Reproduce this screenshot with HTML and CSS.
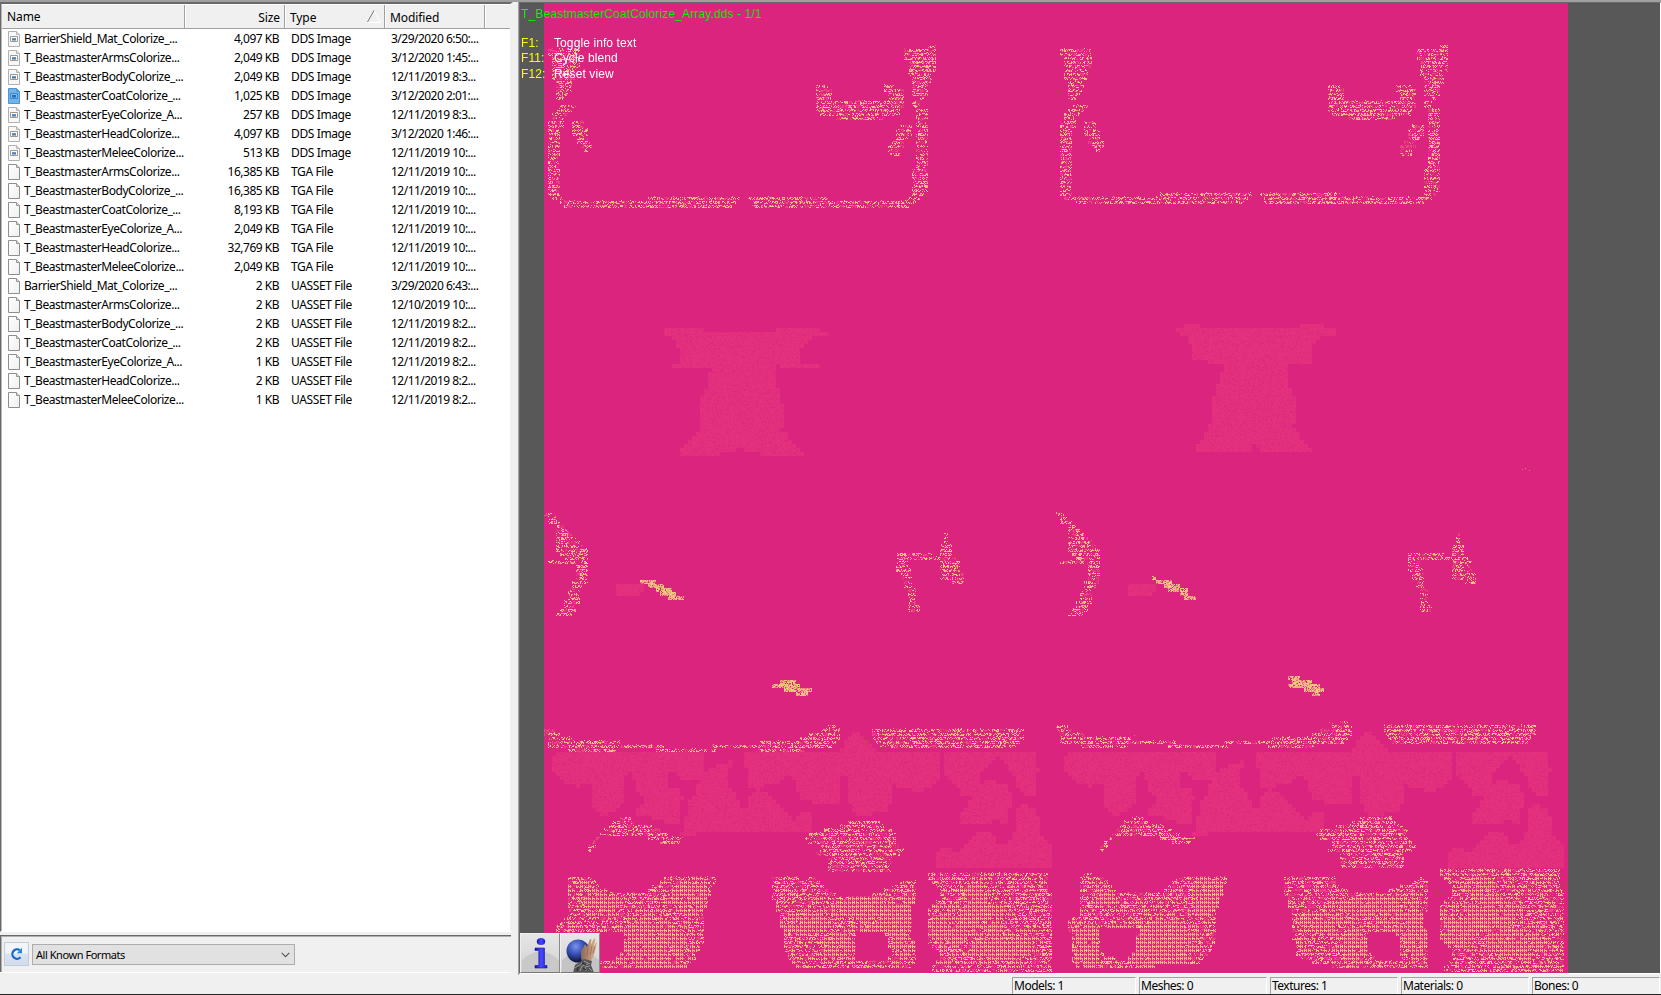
FILE: index.html
```html
<!DOCTYPE html>
<html lang="en">
<head>
<meta charset="utf-8">
<title>Texture browser</title>
<link rel="stylesheet" href="styles.css">
</head>
<body>
<svg width="0" height="0" class="defs">
  <defs>
    <linearGradient id="paper" x1="0" y1="0" x2="1" y2="1"><stop offset="0" stop-color="#fff"/><stop offset="1" stop-color="#eef0f0"/></linearGradient>
    <linearGradient id="pic" x1="0" y1="0" x2="0" y2="1"><stop offset="0" stop-color="#6fa4dc"/><stop offset="1" stop-color="#3c6a80"/></linearGradient>
    <radialGradient id="ball" cx=".4" cy=".3" r=".7"><stop offset="0" stop-color="#7c94e8"/><stop offset=".45" stop-color="#3b55bd"/><stop offset="1" stop-color="#0b1136"/></radialGradient>
    <linearGradient id="blue"><stop offset="0" stop-color="#1414b4"/><stop offset=".5" stop-color="#4a4aff"/><stop offset="1" stop-color="#1c1cd0"/></linearGradient>
    <linearGradient id="skin"><stop offset="0" stop-color="#8c6659"/><stop offset="1" stop-color="#e0b68e"/></linearGradient>
    <symbol id="file" viewBox="0 0 12 16"><path d="M.5.5h8l3 3v12H.5z" fill="url(#paper)" stroke="#8e8e8e"/><path d="M8.5.5v3h3" fill="#ddd" stroke="#8e8e8e" stroke-width=".9"/></symbol>
    <symbol id="image" viewBox="0 0 12 16"><path d="M.5.5h8l3 3v12H.5z" fill="#f7f7f7" stroke="#b0b0b0"/><path d="M8.5.5v3h3" fill="#ddd" stroke="#b0b0b0" stroke-width=".9"/><path d="M2.500 5.500h7v5h-7z" fill="#fff" stroke="#999"/><path d="M4 7h4v2.500H4z" fill="url(#pic)"/></symbol>
    <symbol id="picked" viewBox="0 0 12 16"><path d="M.5.5h8l3 3v12H.5z" fill="#74b4e8" stroke="#4b96d6"/><path d="M8.5.5v3h3" fill="#5aa3df" stroke="#4b96d6"/><path d="M2.500 5.500h7v5h-7z" fill="#7fbcf0" stroke="#3f86c8"/><path d="M4 7h4v2.500H4z" fill="#1f6cba"/></symbol>
  </defs>
</svg>
<div class="app">
  <div class="main">
    <div class="side">
      <div class="list">
        <div class="row head">
          <span class="c-name">Name</span><span class="c-size">Size</span><span class="c-type">Type
            <svg class="sort" width="14" height="13"><path d="M13.500 12.500H.5" stroke="#fff" fill="none"/><path d="M7 .5l6.500 12" stroke="#fff" fill="none"/><path d="M.5 12L7 .5" stroke="#777" fill="none"/></svg></span><span class="c-mod">Modified</span><span class="c-rest"></span>
        </div>
        <div id="rows"></div>
      </div>
      <div class="filter">
        <div class="refresh"><svg width="14" height="14" viewBox="0 0 14 14"><path d="M10.500 10.300A4.700 4.700 0 1 1 9.700 3.200" fill="none" stroke="#1467c8" stroke-width="2.200"/><path d="M12 .8v5.400H6.800z" fill="#1c8ae8"/></svg></div>
        <div class="combo"><span>All Known Formats</span><svg width="9" height="6"><path d="M.7.8l3.800 3.900L8.300.8" fill="none" stroke="#555" stroke-width="1.100"/></svg></div>
      </div>
    </div>
    <div class="view">
      <canvas id="tex" width="1024" height="970"></canvas>
      <div class="info">
        <div class="title">T_BeastmasterCoatColorize_Array.dds - 1/1</div>
        <div class="key k1"><b>F1:</b><span>Toggle info text</span></div>
        <div class="key"><b>F11:</b><span>Cycle blend</span></div>
        <div class="key k3"><b>F12:</b><span>Reset view</span></div>
      </div>
      <div class="tools">
        <div class="tool"><svg width="40" height="40"><path d="M1 26Q19 9 38 26V38H1z" fill="#c9c9c9"/><ellipse cx="20" cy="7.500" rx="4.200" ry="3.500" fill="url(#blue)"/><path d="M14 14h9.500v17.500h2.500V34H14v-2.500h3.800V16.500H14z" fill="url(#blue)" stroke="#1414a0" stroke-width=".6"/></svg></div>
        <div class="tool"><svg width="40" height="40"><path d="M1 26Q19 9 38 26V38H1z" fill="#c4c4c4"/><circle cx="17" cy="17" r="11.500" fill="url(#ball)"/><path d="M21 28l-1-5 0-6 2-3 2-4 2 3 3-8 1.500.5-1 6L33 4.500l1.500.5-2 9L35 8l1 1-3 12-4 7z" fill="url(#skin)"/><path d="M26 22l1-9M29 21l2-9M32 19l2-7" stroke="#8a6450" stroke-width=".7" fill="none"/><path d="M12 39l2-8 6-4 3-2 8 2-1 4 3 8z" fill="#555"/><path d="M14 34l7-5M19 37l2-5 6-2M23 27l6 3M25 37l-1-4 5-1M28 34l3 3" stroke="#999" fill="none"/><path d="M16 37l1-4M22 34l3 2M21 29l4 2" stroke="#222" fill="none"/></svg></div>
      </div>
    </div>
  </div>
  <div class="status"><span>Models: 1</span><span>Meshes: 0</span><span>Textures: 1</span><span>Materials: 0</span><span>Bones: 0</span></div>
</div>
<script src="app.js"></script>
</body>
</html>
```
FILE: styles.css
```css
* { box-sizing: border-box; }
body { margin: 0; background: #f0f0f0; font: 12px/19px "Noto Sans", "Open Sans", sans-serif; color: #000; overflow: hidden; }
.defs { position: absolute; }
.app { width: 1661px; height: 995px; display: flex; flex-direction: column; border-top: 2px solid #a0a0a0; }
.main { display: flex; height: 973px; flex: none; }
.side { width: 519px; display: flex; flex-direction: column; gap: 3px; padding-right: 5px; border-right: 1px solid #a0a0a0; }
.list { height: 930px; flex: none; background: #fff; border: solid #696969; border-width: 2px 0 0 1px; box-shadow: inset 1px 0 #b8b8b8; border-right: 3px solid #f0f0f0; border-bottom: 1px solid #fff; padding-left: 1px; }
.row { display: flex; height: 19px; white-space: nowrap; }
.row span { flex: none; }
.head { background: #f0f0f0; height: 25px; line-height: 26px; border-bottom: 1px solid #a0a0a0; border-top: 1px solid #fff; letter-spacing: -0.1px; }
.head span { border-right: 1px solid #a0a0a0; box-shadow: 1px 0 #fff; }
.head .c-rest { border: 0; box-shadow: none; }
.c-name { width: 183px; padding-left: 5px; display: flex; align-items: center; gap: 5px; }
.c-size { width: 100px; padding-right: 4px; text-align: right; }
.c-type { width: 100px; padding-left: 5px; position: relative; }
.c-mod { width: 100px; padding-left: 5px; }
.body .c-name { padding-left: 6px; gap: 4px; letter-spacing: -0.45px; }
.body .c-name svg { flex: none; }
.body .c-type { padding-left: 6px; letter-spacing: -0.38px; }
.body .c-mod { padding-left: 6px; letter-spacing: -0.52px; }
.body .c-size { padding-right: 6px; letter-spacing: -0.5px; }
.sort { position: absolute; right: 3px; top: 5px; }
.filter { height: 37px; display: flex; align-items: flex-start; gap: 3px; padding: 6px 0 0 3px; margin-right: 2px; border: solid #696969; border-width: 1px 0 0 1px; box-shadow: inset 1px 1px #b0b0b0, 0 1px #fff; }
.refresh { width: 25px; height: 24px; border: 1px solid #c3ccd8; background: linear-gradient(#f1f4f9 45%, #dbe3f0 50%, #d2dcec); display: flex; align-items: center; justify-content: center; }
.combo { margin-top: 2px; width: 263px; height: 21px; background: #e1e1e1; border: 1px solid #adadad; display: flex; align-items: center; justify-content: space-between; padding: 0 4px 0 3px; font-size: 11px; letter-spacing: -0.45px; }
.view { position: relative; width: 1142px; height: 972px; background: #585858; border: 1px solid #696969; border-right-color: #fff; border-bottom-color: #fff; padding-left: 24px; }
#tex { display: block; }
.info { position: absolute; left: 1px; top: 4px; font: 12px/15px "Liberation Sans", Arial, sans-serif; color: #fff; letter-spacing: .1px; }
.title { color: #0f0; height: 15px; letter-spacing: .13px; white-space: nowrap; }
.key { display: flex; }
.key b { width: 33px; font-weight: normal; color: #ff0; letter-spacing: .1px; }
.k1 { margin-top: 14px; }
.k3 { margin-top: 1px; }
.tools { position: absolute; left: 0; bottom: 0; display: flex; }
.tool { width: 40px; height: 40px; background: linear-gradient(#e6e6e6, #d2d2d2); border: 1px solid #efefef; border-right-color: #8a8a8a; border-bottom-color: #777; overflow: hidden; }
.tool svg { display: block; }
.status { height: 20px; padding: 2px 0 0 1012px; display: flex; gap: 3px; border-bottom: 1px solid #262626; }
.status span { flex: none; width: 128px; height: 17px; line-height: 16px; border: 1px solid #a0a0a0; border-right-color: #fff; border-bottom: 0; padding-left: 1px; letter-spacing: -.5px; }
.status span:first-child { width: 124px; }
```
FILE: app.js
```js
const files = `BarrierShield_Mat_Colorize_...|4,097|DDS|3/29/2020 6:50:...
T_BeastmasterArmsColorize...|2,049|DDS|3/12/2020 1:45:...
T_BeastmasterBodyColorize_...|2,049|DDS|12/11/2019 8:3...
T_BeastmasterCoatColorize_...|1,025|DDS|3/12/2020 2:01:...
T_BeastmasterEyeColorize_A...|257|DDS|12/11/2019 8:3...
T_BeastmasterHeadColorize...|4,097|DDS|3/12/2020 1:46:...
T_BeastmasterMeleeColorize...|513|DDS|12/11/2019 10:...
T_BeastmasterArmsColorize...|16,385|TGA|12/11/2019 10:...
T_BeastmasterBodyColorize_...|16,385|TGA|12/11/2019 10:...
T_BeastmasterCoatColorize_...|8,193|TGA|12/11/2019 10:...
T_BeastmasterEyeColorize_A...|2,049|TGA|12/11/2019 10:...
T_BeastmasterHeadColorize...|32,769|TGA|12/11/2019 10:...
T_BeastmasterMeleeColorize...|2,049|TGA|12/11/2019 10:...
BarrierShield_Mat_Colorize_...|2|UASSET|3/29/2020 6:43:...
T_BeastmasterArmsColorize...|2|UASSET|12/10/2019 10:...
T_BeastmasterBodyColorize_...|2|UASSET|12/11/2019 8:2...
T_BeastmasterCoatColorize_...|2|UASSET|12/11/2019 8:2...
T_BeastmasterEyeColorize_A...|1|UASSET|12/11/2019 8:2...
T_BeastmasterHeadColorize...|2|UASSET|12/11/2019 8:2...
T_BeastmasterMeleeColorize...|1|UASSET|12/11/2019 8:2...`.split('\n').map(l => l.split('|'));
document.getElementById('rows').innerHTML = files.map(([n, s, t, m], i) =>
  `<div class="row body"><span class="c-name"><svg width="12" height="16"><use href="#${i === 3 ? 'picked' : t === 'DDS' ? 'image' : 'file'}"/></svg>${n}</span><span class="c-size">${s} KB</span><span class="c-type">${t} ${t === 'DDS' ? 'Image' : 'File'}</span><span class="c-mod">${m}</span></div>`).join('');

// The texture is built of 4x4 compression blocks; coordinates are window pixels.
const OX = 544, OY = 3;
const ctx = document.getElementById('tex').getContext('2d');
ctx.fillStyle = '#da247e';
ctx.fillRect(0, 0, 1024, 970);
let seed = 7;
const rnd = () => ((seed = (seed * 1664525 + 1013904223) >>> 0) / 4294967296);
const px = (x, y, c, w = 1) => { ctx.fillStyle = c; ctx.fillRect(x - OX, y - OY, w, 1); };
const poly = s => s.split(' ').map(p => p.split(',').map(Number));
function inside(P, x, y) {
  let r = false;
  for (let i = 0, j = P.length - 1; i < P.length; j = i++) {
    const [a, b] = P[i], [c, d] = P[j];
    if ((b > y) !== (d > y) && x < (c - a) * (y - b) / (d - b) + a) r = !r;
  }
  return r;
}
function blocks(P, fn, hole) {
  const xs = P.map(p => p[0]), ys = P.map(p => p[1]);
  for (let y = Math.floor(Math.min(...ys) / 4) * 4; y < Math.max(...ys); y += 4)
    for (let x = Math.floor(Math.min(...xs) / 4) * 4; x < Math.max(...xs); x += 4)
      if (inside(P, x + 2, y + 2) && !(hole && inside(hole, x + 2, y + 2))) fn(x, y);
}
const tones = ['#e8cf7c', '#f0b483', '#f5a582', '#e8cf7c', '#ee6f7d'];
const tone = () => tones[Math.floor(rnd() * 5)];
function sparse(x, y) {
  const c = rnd() < .14 ? '#e84a7e' : null;
  for (let j = 0; j < 4; j++) for (let i = 0; i < 4; i++)
    if (rnd() < (j === 0 ? .06 : .48)) px(x + i, y + j, c || tone());
}
function dense(x, y) {
  const c = rnd() < .8 ? '#f0b483' : '#e8cf7c';
  px(x, y, '#e84a7e', 2);
  px(x, y + 1, c); px(x, y + 2, c, 3); px(x, y + 3, c); px(x + 2, y + 3, c);
  if (rnd() < .35) px(x + 2, y + 1, c);
  if (rnd() < .4) px(x + 3, y + 2, '#ee6f7d');
}
function solid(x, y) {
  for (let j = 0; j < 4; j++) for (let i = 0; i < 4; i++)
    if (rnd() < .85) px(x + i, y + j, tone());
}
function light(x, y) {
  for (let j = 0; j < 4; j++) for (let i = 0; i < 4; i++) px(x + i, y + j, rnd() < .25 ? '#de297f' : '#e4317e');
}
const shift = (P, dy) => P.map(([x, y]) => [x + 512, y + dy]);
const both = (s, fn, dy = 0) => { const P = poly(s); blocks(P, fn); blocks(shift(P, dy), fn); };

// faint regions
blocks(poly('664,332 668,328 704,328 704,332 776,332 776,328 820,328 820,332 828,332 828,336 816,336 805,344 800,348 800,364 820,364 820,368 784,368 776,364 776,388 780,388 780,404 784,404 784,424 780,432 788,432 788,440 800,448 804,452 804,456 764,456 760,452 744,452 740,446 736,452 724,452 720,456 680,456 680,452 688,444 696,432 700,432 700,404 704,390 708,388 708,376 712,368 672,368 672,364 680,364 680,348 676,344 672,336 664,336'), light);
blocks(poly('1176,328 1184,328 1184,324 1200,324 1200,328 1300,328 1300,324 1324,324 1324,328 1336,328 1336,336 1324,336 1312,348 1312,364 1288,364 1288,388 1292,388 1296,404 1296,424 1292,428 1300,432 1300,436 1312,448 1312,452 1260,452 1254,444 1252,452 1196,452 1196,448 1204,440 1208,428 1212,424 1212,404 1220,376 1224,372 1224,364 1192,360 1192,348 1188,336 1180,336'), light);
both('616,588 620,584 644,584 644,592 636,596 620,596 616,592', light);
both('552,756 560,752 708,752 704,756 704,776 700,780 680,780 680,776 672,772 668,776 668,788 680,788 680,792 684,796 680,804 680,824 672,824 660,820 648,816 636,816 636,812 644,804 648,800 640,796 636,788 632,772 624,776 624,800 616,812 600,816 592,804 592,784 584,784 580,788 560,780 552,768', light);
both('680,836 684,828 688,804 696,792 700,776 712,768 724,764 732,760 732,768 728,772 728,788 736,792 740,808 748,808 748,800 756,788 768,792 776,804 784,808 788,816 796,820 800,812 812,812 812,832 700,832 696,836', light);
both('744,752 840,752 844,744 848,736 860,732 868,740 876,748 880,752 940,752 940,776 936,784 920,792 904,788 892,784 892,796 888,812 856,816 852,808 848,796 848,776 840,776 840,804 824,804 800,800 796,784 788,772 780,784 752,788 748,784 748,768 744,764', light);
both('944,752 1036,752 1036,764 1040,768 1036,780 1036,796 1024,796 1016,784 1016,776 1008,768 1000,756 988,764 984,772 980,776 980,784 976,796 964,796 964,800 956,784 952,780 944,776', light);
both('980,784 988,780 1008,784 1012,796 1008,824 1004,828 1000,820 984,824 960,824 960,816 968,808 968,800 976,796', light);
both('936,868 936,852 944,848 960,852 968,844 972,836 980,832 992,832 996,836 996,844 1008,844 1012,836 1016,828 1016,812 1024,804 1036,808 1040,820 1040,832 1052,844 1052,868', light);

// speckled outlines
both('548,48 580,48 580,68 576,72 572,92 564,100 556,100 556,80 552,76 552,56 548,56', sparse);
both('560,104 576,104 576,108 568,112 562,120 564,126 560,128 560,192 564,200 556,200 548,196 548,128 552,116', sparse);
both('572,120 584,120 588,132 592,148 584,152 576,140 572,132', sparse);
both('648,196 740,196 736,204 732,208 568,208 556,200 648,200', sparse, -4);
both('748,196 830,196 830,200 916,200 912,208 752,208 752,200 748,200', sparse, -4);
both('916,108 928,108 928,192 920,200 908,200 912,192 912,168 916,168', sparse);
both('904,48 928,48 932,44 936,44 936,72 932,72 932,84 928,88 928,96 920,100 920,108 912,108 912,100 920,100 920,96 912,96 912,76 908,72 908,60 904,56', sparse);
both('816,88 820,84 828,84 832,88 832,100 888,100 888,92 884,88 888,84 896,84 904,88 904,108 900,112 900,116 888,116 880,120 836,120 836,116 824,116 816,108', sparse);
both('900,124 912,124 912,136 904,144 900,156 888,156 888,148 896,136', sparse);
both('544,512 552,512 560,520 572,532 580,544 588,550 588,584 580,592 580,600 576,612 568,616 556,616 556,612 564,608 568,596 572,584 576,580 576,564 548,564 548,560 564,560 560,552 556,548 556,524 548,524 548,516', sparse);
both('944,532 948,532 948,544 952,546 952,556 956,556 960,564 964,576 964,584 952,584 952,580 940,580 940,560 912,560 908,564 912,572 912,584 916,588 916,600 920,608 924,612 912,612 908,608 908,588 904,584 900,572 896,568 896,556 900,552 932,552 936,556 940,556 940,544 944,544', sparse);
both('544,728 556,728 564,736 580,740 620,740 620,744 660,744 668,748 712,748 716,744 760,744 764,740 800,740 804,736 816,732 828,728 832,724 840,728 840,740 832,748 808,748 804,752 756,752 756,748 716,748 716,752 660,752 656,748 620,748 612,752 568,752 568,748 548,748 548,736 544,736', sparse, -4);
both('872,728 1024,728 1024,736 1020,744 1012,748 884,748 880,744 872,740', sparse, -4);
both('588,852 592,840 604,832 608,828 616,820 628,816 636,822 648,824 656,828 668,834 684,838 676,844 664,844 656,840 640,836 600,838 596,844 592,852', sparse);
both('804,840 812,832 840,828 844,824 856,820 880,820 888,828 896,832 896,840 904,848 900,856 892,856 892,872 828,872 828,856 816,856 820,848 824,844 816,844', sparse, -4);

// solid streaks: [x0, x1, y]
[[640, 656, 580], [648, 664, 584], [656, 672, 588], [660, 676, 592], [668, 684, 596],
 [1152, 1156, 576], [1156, 1172, 580], [1164, 1180, 584], [1168, 1188, 588], [1180, 1188, 592], [1184, 1196, 596],
 [780, 796, 680], [772, 800, 684], [784, 812, 688], [796, 808, 692],
 [1288, 1300, 676], [1292, 1312, 680], [1288, 1320, 684], [1304, 1324, 688], [1312, 1320, 692]
].forEach(([a, b, y]) => { for (let x = a; x < b; x += 4) solid(x, y); });
[[1522, 469], [1525, 468], [1529, 470], [1329, 722], [1332, 723], [1134, 735]].forEach(([x, y]) => px(x, y, '#ee6f7d'));

// large patches, denser around the given [x, y, rx, ry] cores
function patch(s, cores, hole) {
  blocks(poly(s), (x, y) => {
    let d = 9;
    for (const [cx, cy, rx, ry] of cores) d = Math.min(d, Math.hypot((x - cx) / rx, (y - cy) / ry));
    (rnd() < (d < 1 ? .9 : d < 1.4 ? .4 : .14) ? dense : sparse)(x, y);
  }, hole && poly(hole));
}
patch('568,876 592,876 596,884 612,892 644,892 656,884 664,880 664,876 716,876 712,892 708,900 704,920 704,940 696,956 692,964 684,968 560,968 560,932 556,932 556,924 568,916 568,900', [[690, 896, 20, 18], [650, 944, 32, 28], [600, 900, 18, 12]], '604,932 626,932 624,952 616,960 590,960 590,932');
patch('1080,880 1088,872 1108,880 1112,888 1124,892 1160,892 1168,888 1180,876 1228,876 1224,892 1216,916 1216,940 1208,956 1196,964 1160,964 1156,968 1076,968 1072,960 1072,936 1068,928 1068,920 1080,916', [[1208, 894, 20, 18], [1160, 944, 30, 28], [1086, 944, 14, 24], [1104, 894, 12, 10]], '1100,928 1140,928 1136,936 1136,952 1124,960 1108,956 1098,948');
patch('772,876 792,876 808,880 812,876 824,884 832,892 844,896 868,896 880,892 896,884 904,880 916,880 916,904 912,908 912,936 916,940 916,960 912,968 796,968 784,948 784,936 780,920 776,904 772,896', [[864, 905, 36, 10], [806, 922, 26, 10], [902, 930, 12, 30], [840, 945, 14, 14], [878, 920, 20, 12]], '856,932 884,932 888,940 892,952 888,960 856,960');
patch('1284,876 1336,876 1338,884 1350,892 1385,892 1395,888 1408,884 1424,876 1428,884 1428,908 1424,920 1428,936 1428,968 1344,968 1300,960 1296,948 1292,932 1292,916 1288,900 1284,892', [[1374, 903, 36, 10], [1316, 920, 24, 10], [1414, 930, 12, 30], [1352, 942, 14, 16], [1392, 920, 20, 12]], '1368,932 1396,932 1400,940 1400,960 1380,960 1368,952');
patch('928,876 932,872 1048,872 1048,892 1052,892 1052,972 932,972 932,964 940,960 940,952 928,944 928,908 940,900 940,888 936,884', [[948, 928, 18, 20], [980, 912, 22, 16], [1000, 944, 30, 14], [972, 890, 12, 10]]);
patch('1440,872 1444,868 1560,868 1560,884 1564,888 1564,972 1444,972 1444,964 1452,960 1452,948 1440,940 1440,904 1452,896 1452,884 1444,880', [[1460, 924, 18, 20], [1492, 910, 22, 18], [1512, 940, 30, 14], [1480, 884, 14, 10]]);
```
